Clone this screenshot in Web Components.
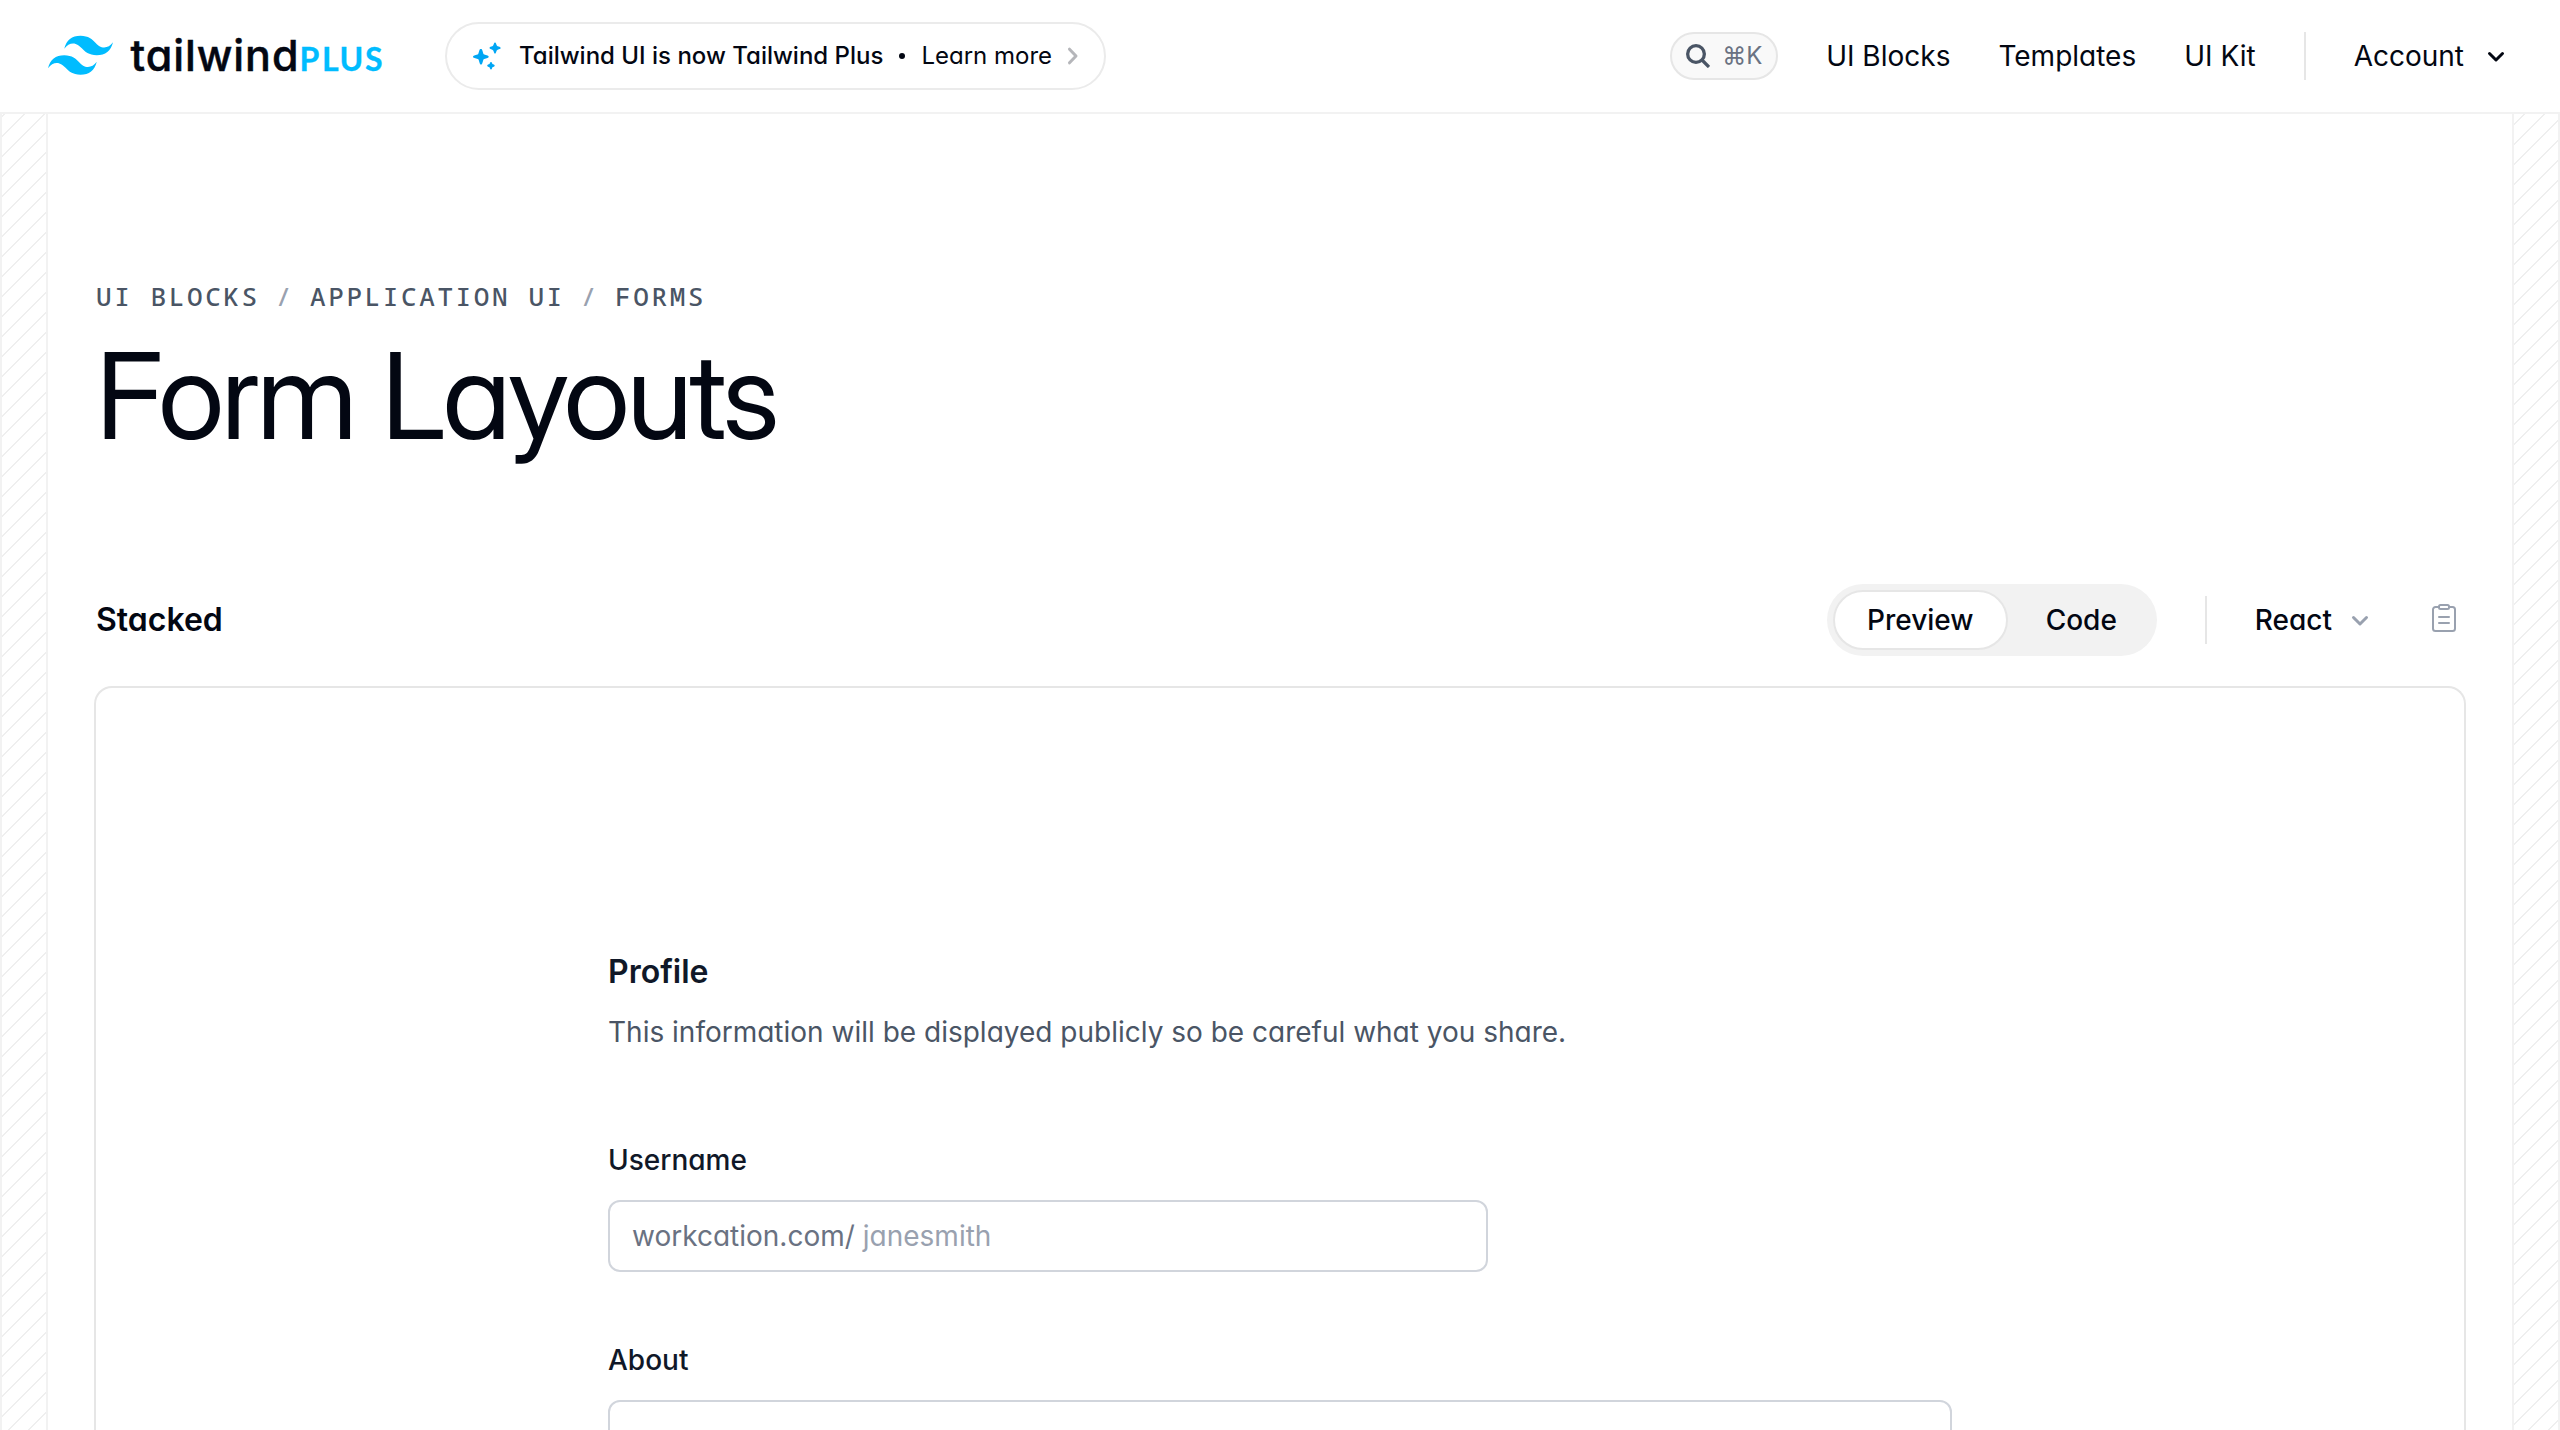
<!DOCTYPE html>
<html lang="en">
<head>
<meta charset="utf-8">
<title>Form Layouts - Tailwind Plus</title>
<style>
html,body{margin:0;background:#fff}
body{width:2560px;height:1430px;overflow:hidden;font-family:Inter,"Liberation Sans",sans-serif;font-feature-settings:"cv11";font-size:28px;line-height:48px;color:#030712}
</style>
</head>
<body>
<plus-page></plus-page>
<script>
function define(name, html) {
  const t = document.createElement('template');
  t.innerHTML = '<style>*{box-sizing:border-box}svg{display:block;flex:none}</style>' + html;
  customElements.define(name, class extends HTMLElement {
    constructor() {
      super();
      this.attachShadow({mode: 'open'}).append(t.content.cloneNode(true));
    }
  });
}

define('plus-logo', `
<style>:host{display:block;width:340px;height:48px}</style>
<svg width="340" height="48" viewBox="0 0 340 48" overflow="visible" role="img" aria-label="Tailwind Plus">
  <path fill="#00bcff" transform="translate(0 3.8) scale(1.204)" d="M27 0c-7.2 0-11.7 3.6-13.5 10.8 2.7-3.6 5.85-4.95 9.45-4.05 2.054.513 3.522 2.004 5.147 3.653C30.744 13.09 33.808 16.2 40.5 16.2c7.2 0 11.7-3.6 13.5-10.8-2.7 3.6-5.85 4.95-9.45 4.05-2.054-.513-3.522-2.004-5.147-3.653C36.756 3.11 33.692 0 27 0zM13.5 16.2C6.3 16.2 1.8 19.8 0 27c2.7-3.6 5.85-4.95 9.45-4.05 2.054.514 3.522 2.004 5.147 3.653C17.244 29.29 20.308 32.4 27 32.4c7.2 0 11.7-3.6 13.5-10.8-2.7 3.6-5.85 4.95-9.45 4.05-2.054-.513-3.522-2.004-5.147-3.653C23.256 19.31 20.192 16.2 13.5 16.2z"/>
  <text x="82.5" y="38.6" font-size="43" font-weight="500" fill="#030712" stroke="#030712" stroke-width=".5" textLength="168" style="font-family:Inter,sans-serif">tailwind</text>
  <text x="251.5 274 291.5 317" y="38.6" font-size="32" font-weight="700" fill="#00bcff" stroke="#00bcff" stroke-width=".3" style="font-family:Lato,sans-serif">PLUS</text>
</svg>`);

define('plus-banner', `
<style>
:host{display:flex;align-items:center;width:661px;height:68px;border:2px solid #ebebeb;border-radius:34px;padding-left:24px;font-size:24px}
.sparkle{margin-right:16px}
b{font-weight:500}
.dot{width:6px;height:6px;border-radius:50%;background:#030712;margin:0 16px}
.chev{margin-left:14px}
</style>
<svg class="sparkle" width="32" height="32" viewBox="0 0 32 32" fill="#00a6f4"><path d="M10 9c.7 0 1 .4 1.300 1.300l1 3.100c.2.6.4.8 1 1l3.200 1.100c.8.3 1.200.6 1.200 1.200s-.4.900-1.200 1.200l-3.200 1.100c-.6.2-.8.4-1 1l-1 3.200c-.3.900-.6 1.300-1.300 1.300s-1-.4-1.300-1.300l-1-3.200c-.2-.6-.4-.8-1-1l-3.200-1.100C2.400 17.600 2 17.300 2 16.700s.4-.9 1.200-1.200l3.200-1.100c.6-.2.8-.4 1-1l1-3.100C8.700 9.400 9 9 10 9zM24 2.500c.6 0 .8.300 1 .9l.6 1.700c.2.600.5.900 1.100 1.100l1.800.6c.7.3 1.100.6 1.100 1.200s-.4.800-1.100 1.100l-1.800.6c-.6.2-.9.5-1.100 1.100l-.6 1.800c-.2.700-.5 1.100-1 1.100s-.8-.4-1-1.100l-.6-1.800c-.2-.6-.5-.9-1.100-1.100l-1.800-.6c-.7-.3-1-.6-1-1.100s.3-.9 1-1.200l1.800-.6c.6-.2.9-.5 1.100-1.100l.6-1.700c.2-.6.4-.9 1-.9zM20 22c.5 0 .8.300 1 .8l.4 1.100 1.400.6c.6.300.9.600.9 1.100s-.3.900-.9 1.200l-1.400.5-.4 1.200c-.2.500-.5.900-1 .9s-.8-.4-1-.9l-.5-1.200-1.400-.5c-.6-.3-.9-.7-.9-1.200s.3-.8.900-1.100l1.400-.6.5-1.100c.2-.5.5-.8 1-.8z"/></svg>
<b>Tailwind UI is now Tailwind Plus</b><span class="dot"></span><span>Learn more</span>
<svg class="chev" width="14" height="20" viewBox="0 0 14 20" fill="none" stroke="#b5b6ba" stroke-width="3" stroke-linecap="round" stroke-linejoin="round"><path d="M3.500 3.200 10 10 3.500 16.800"/></svg>`);

define('search-pill', `
<style>
:host{display:flex;align-items:center;width:108px;height:48px;border:2px solid #e6e6e6;border-radius:24px;background:#f9f9f9;padding-left:14px;font-size:24px;color:#6a7282}
span{margin-left:12px}
</style>
<svg width="24" height="24" viewBox="0 0 24 24" fill="none" stroke="#4a5565" stroke-width="3.300"><circle cx="10" cy="10" r="8.350"/><path d="M16 16l7 7"/></svg><span>⌘K</span>`);

define('nav-chevron', `
<style>:host{display:block}</style>
<svg width="32" height="32" viewBox="0 0 32 32" fill="none" stroke="currentColor" stroke-width="3" stroke-linecap="round" stroke-linejoin="round"><path d="M9.500 13.500 16 20l6.500-6.500"/></svg>`);

define('v-rule', `<style>:host{display:block;width:2px;height:48px;background:#e6e6e6}</style>`);

define('plus-header', `
<style>
:host{display:block;border-bottom:2px solid #f2f2f2}
header{display:flex;align-items:center;height:112px;padding:0 48px}
plus-banner{margin-left:57px}
nav{display:flex;align-items:center;gap:48px;margin-left:auto}
.acct{display:flex;align-items:center;gap:16px}
</style>
<header><plus-logo></plus-logo><plus-banner></plus-banner>
<nav><search-pill></search-pill><span>UI Blocks</span><span>Templates</span><span>UI Kit</span><v-rule></v-rule><span class="acct">Account<nav-chevron></nav-chevron></span></nav></header>`);

define('hatch-gutter', `
<style>:host{display:block;flex:none;width:48px;border:solid #f2f2f2;border-width:0 2px;background:repeating-linear-gradient(315deg,#efefef 0,#efefef 2px,transparent 0,transparent 50%) var(--hatch-x,-2px) -14px/20px 20px}</style>`);

define('page-title', `
<style>
:host{display:block;padding-left:48px}
.crumb{margin-top:158px;font:500 26px/48px "Noto Sans Mono","DejaVu Sans Mono",monospace;letter-spacing:2.600px;color:#4a5565;display:flex;white-space:pre}
i{font-style:normal;color:#99a1af;margin:0 16px}
h1{margin:16px 0 0;font-family:"Inter Display",Inter,sans-serif;font-size:120px;line-height:120px;font-weight:400;letter-spacing:-3px}
</style>
<div class="crumb"><span>UI BLOCKS</span><i>/</i><span>APPLICATION UI</span><i>/</i><span>FORMS</span></div>
<h1>Form Layouts</h1>`);

define('view-tabs', `
<style>
:host{display:flex;align-items:center;width:330px;height:72px;padding:6px;border-radius:36px;background:#f2f2f2;font-weight:500}
.on{width:175px;height:60px;border:2px solid #e6e6e6;border-radius:30px;background:#fff;display:flex;align-items:center;justify-content:center}
.off{flex:1;text-align:center;padding-left:4px}
</style>
<span class="on"><span>Preview</span></span><span class="off">Code</span>`);

define('block-toolbar', `
<style>
:host{display:flex;align-items:center;height:72px;margin:128px 48px 30px;}
h2{margin:0;font-size:32px;font-weight:600}
view-tabs{margin-left:auto}
v-rule{margin:0 48px}
.lang{font-weight:500;margin-right:12px}
nav-chevron{color:#99a1af}
.clip{margin:-4px 4px 0 52px}
</style>
<h2>Stacked</h2><view-tabs></view-tabs><v-rule></v-rule><span class="lang">React</span><nav-chevron></nav-chevron>
<svg class="clip" width="32" height="32" viewBox="0 0 32 32" fill="none" stroke="#99a1af" stroke-width="2" stroke-linejoin="round" stroke-linecap="round"><path d="M11 5H7.500A2.500 2.500 0 0 0 5 7.500v19A2.500 2.500 0 0 0 7.500 29h17a2.500 2.500 0 0 0 2.500-2.500v-19A2.500 2.500 0 0 0 24.500 5H21M11 15h10M11 21h10"/><rect x="11" y="3" width="10" height="4" rx="1.500"/></svg>`);

define('form-field', `
<style>:host{display:block}label{display:block;font-weight:500;margin-bottom:16px}</style>
<label><slot name="label"></slot></label><slot></slot>`);

define('preview-frame', `
<style>
:host{display:block;flex:1;margin:0 46px;border:2px solid #e6e6e6;border-bottom:0;border-radius:18px 18px 0 0;color:#101828}
.form{width:1344px;margin:256px auto 0}
h3{margin:0;font-size:32px;line-height:56px;font-weight:600}
p{margin:8px 0 80px;color:#4a5565}
form-field+form-field{margin-top:64px}
.in{display:flex;align-items:center;width:880px;height:72px;border:2px solid #d1d5dc;border-radius:12px;padding-left:22px;color:#6a7282;gap:8px}
.ph{color:#99a1af}
.area{height:160px;border:2px solid #d1d5dc;border-radius:12px}
</style>
<div class="form"><h3>Profile</h3><p>This information will be displayed publicly so be careful what you share.</p>
<form-field><span slot="label">Username</span><div class="in"><span>workcation.com/</span><span class="ph">janesmith</span></div></form-field>
<form-field><span slot="label">About</span><div class="area"></div></form-field></div>`);

define('plus-page', `
<style>
:host{display:flex;flex-direction:column;height:1430px;overflow:hidden}
.body{display:flex;flex:1;min-height:0}
main{flex:1;display:flex;flex-direction:column;min-width:0}
.right{--hatch-x:-14px}
</style>
<plus-header></plus-header>
<div class="body"><hatch-gutter></hatch-gutter><main><page-title></page-title><block-toolbar></block-toolbar><preview-frame></preview-frame></main><hatch-gutter class="right"></hatch-gutter></div>`);
</script>
</body>
</html>
